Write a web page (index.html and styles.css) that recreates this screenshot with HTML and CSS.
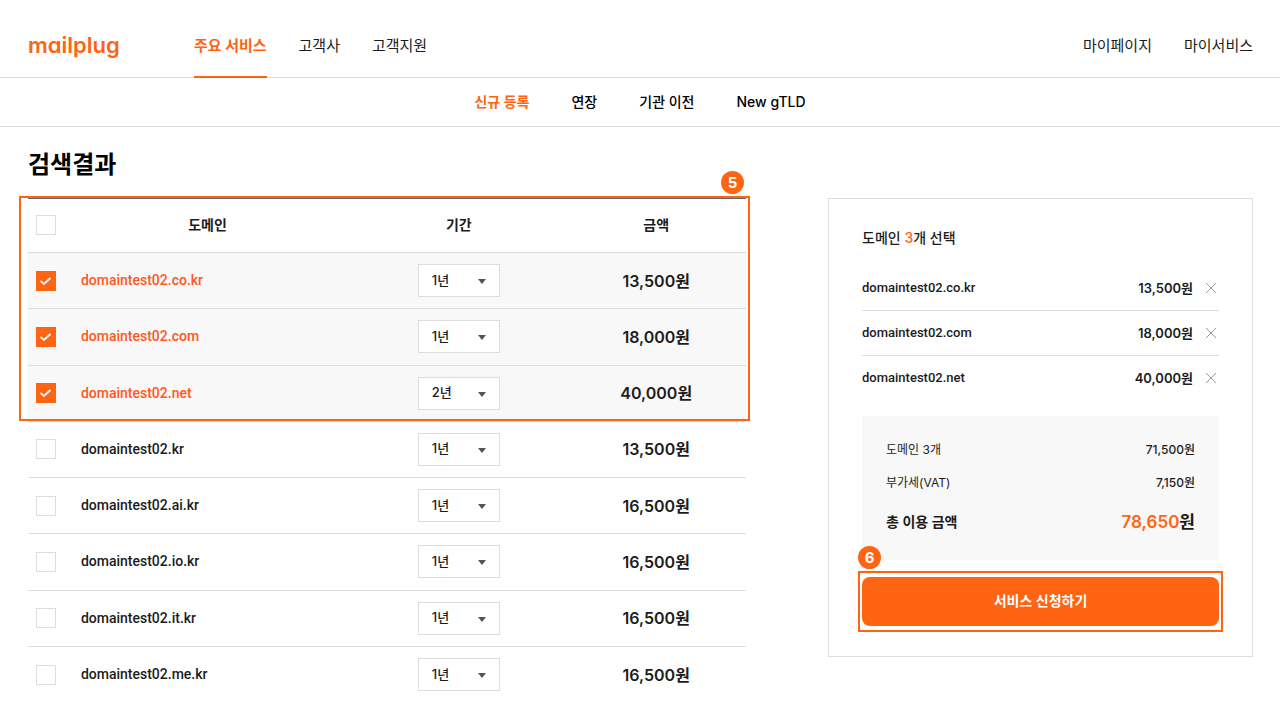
FILE: index.html
```html
<!DOCTYPE html>
<html lang="ko">
<head>
<meta charset="utf-8">
<meta name="viewport" content="width=device-width, initial-scale=1">
<title>mailplug</title>
<link rel="stylesheet" href="styles.css">
</head>
<body>
<header class="header">
  <a class="logo" href="#">mailplug</a>
  <nav class="main-nav">
    <a class="nav-link active" href="#">주요 서비스</a>
    <a class="nav-link" href="#">고객사</a>
    <a class="nav-link" href="#">고객지원</a>
  </nav>
  <nav class="user-nav">
    <a class="nav-link" href="#">마이페이지</a>
    <a class="nav-link" href="#">마이서비스</a>
  </nav>
</header>
<nav class="sub-nav">
  <a class="sub-link active" href="#">신규 등록</a>
  <a class="sub-link" href="#">연장</a>
  <a class="sub-link" href="#">기관 이전</a>
  <a class="sub-link" href="#">New gTLD</a>
</nav>
<main class="content">
  <h1 class="title">검색결과</h1>
  <div class="columns">
    <section class="results">
      <table class="domains">
        <thead>
          <tr>
            <th class="col-check"><input class="check" type="checkbox" aria-label="전체 선택"></th>
            <th class="col-domain">도메인</th>
            <th class="col-period">기간</th>
            <th class="col-price">금액</th>
          </tr>
        </thead>
        <tbody>
          <tr class="selected">
            <td><input class="check" type="checkbox" id="d1" checked></td>
            <td class="domain"><label for="d1">domaintest02.co.kr</label></td>
            <td><span class="period"><select aria-label="기간"><option>1년</option><option>2년</option></select></span></td>
            <td class="price">13,500원</td>
          </tr>
          <tr class="selected">
            <td><input class="check" type="checkbox" id="d2" checked></td>
            <td class="domain"><label for="d2">domaintest02.com</label></td>
            <td><span class="period"><select aria-label="기간"><option>1년</option><option>2년</option></select></span></td>
            <td class="price">18,000원</td>
          </tr>
          <tr class="selected">
            <td><input class="check" type="checkbox" id="d3" checked></td>
            <td class="domain"><label for="d3">domaintest02.net</label></td>
            <td><span class="period"><select aria-label="기간"><option>1년</option><option selected>2년</option></select></span></td>
            <td class="price">40,000원</td>
          </tr>
          <tr>
            <td><input class="check" type="checkbox" id="d4"></td>
            <td class="domain"><label for="d4">domaintest02.kr</label></td>
            <td><span class="period"><select aria-label="기간"><option>1년</option><option>2년</option></select></span></td>
            <td class="price">13,500원</td>
          </tr>
          <tr>
            <td><input class="check" type="checkbox" id="d5"></td>
            <td class="domain"><label for="d5">domaintest02.ai.kr</label></td>
            <td><span class="period"><select aria-label="기간"><option>1년</option><option>2년</option></select></span></td>
            <td class="price">16,500원</td>
          </tr>
          <tr>
            <td><input class="check" type="checkbox" id="d6"></td>
            <td class="domain"><label for="d6">domaintest02.io.kr</label></td>
            <td><span class="period"><select aria-label="기간"><option>1년</option><option>2년</option></select></span></td>
            <td class="price">16,500원</td>
          </tr>
          <tr>
            <td><input class="check" type="checkbox" id="d7"></td>
            <td class="domain"><label for="d7">domaintest02.it.kr</label></td>
            <td><span class="period"><select aria-label="기간"><option>1년</option><option>2년</option></select></span></td>
            <td class="price">16,500원</td>
          </tr>
          <tr>
            <td><input class="check" type="checkbox" id="d8"></td>
            <td class="domain"><label for="d8">domaintest02.me.kr</label></td>
            <td><span class="period"><select aria-label="기간"><option>1년</option><option>2년</option></select></span></td>
            <td class="price">16,500원</td>
          </tr>
        </tbody>
      </table>
      <div class="mark mark-results"><span class="step">5</span></div>
    </section>
    <aside class="cart">
      <h2 class="cart-title">도메인 <em>3</em>개 선택</h2>
      <ul class="cart-list">
        <li><span class="cart-name">domaintest02.co.kr</span><span class="cart-price">13,500원</span><button class="remove" type="button" aria-label="삭제"><svg viewBox="0 0 12 12" width="12" height="12"><path d="M1 1l10 10M11 1L1 11"/></svg></button></li>
        <li><span class="cart-name">domaintest02.com</span><span class="cart-price">18,000원</span><button class="remove" type="button" aria-label="삭제"><svg viewBox="0 0 12 12" width="12" height="12"><path d="M1 1l10 10M11 1L1 11"/></svg></button></li>
        <li><span class="cart-name">domaintest02.net</span><span class="cart-price">40,000원</span><button class="remove" type="button" aria-label="삭제"><svg viewBox="0 0 12 12" width="12" height="12"><path d="M1 1l10 10M11 1L1 11"/></svg></button></li>
      </ul>
      <dl class="summary">
        <div class="sum-row"><dt>도메인 3개</dt><dd>71,500원</dd></div>
        <div class="sum-row"><dt>부가세(VAT)</dt><dd>7,150원</dd></div>
        <div class="sum-row total"><dt>총 이용 금액</dt><dd><em>78,650</em>원</dd></div>
      </dl>
      <div class="apply">
        <button class="apply-button" type="button">서비스 신청하기</button>
        <div class="mark mark-apply"><span class="step">6</span></div>
      </div>
    </aside>
  </div>
</main>
</body>
</html>
```
FILE: styles.css
```css
* { box-sizing: border-box; }

body {
  margin: 0;
  background: #fff;
  color: #1c1c1c;
  font-family: Inter, "Noto Sans CJK KR", sans-serif;
  font-size: 14px;
  line-height: 20px;
}

a { color: inherit; text-decoration: none; }
em { font-style: normal; color: #ff6413; }
button, select, input { font: inherit; color: inherit; margin: 0; }

.header {
  display: flex;
  height: 78px;
  padding: 0 27px 0 28px;
  border-bottom: 1px solid #ddd;
}
.logo {
  flex: 0 0 166px;
  align-self: center;
  padding-top: 12px;
  color: #ff6413;
  font-size: 22px;
  font-weight: 600;
  line-height: 28px;
  font-feature-settings: "cv11";
}
.main-nav, .user-nav { display: flex; gap: 32px; }
.user-nav { margin-left: auto; }
.nav-link {
  height: 78px;
  padding-top: 36px;
  font-size: 15px;
  font-weight: 400;
}
.nav-link.active {
  border-bottom: 2px solid #ff6413;
  color: #ff6413;
  font-weight: 700;
}

.sub-nav {
  display: flex;
  justify-content: center;
  align-items: center;
  gap: 42px;
  height: 49px;
  border-bottom: 1px solid #ddd;
  color: #000;
  font-weight: 500;
}
.sub-link.active { color: #ff6413; font-weight: 600; }

.content { padding: 22px 27px 20px 28px; }
.title {
  margin: 0 0 16px;
  color: #000;
  font-size: 24px;
  font-weight: 700;
  line-height: 32px;
}
.columns {
  display: grid;
  grid-template-columns: minmax(0, 1fr) 425px;
  align-items: start;
  gap: 82px;
}
.results { position: relative; }

.domains {
  width: 100%;
  height: 506px;
  border-collapse: separate;
  border-spacing: 0;
  border-top: 2px solid #666;
  table-layout: fixed;
}
.col-check { width: 5%; }
.col-domain { width: 40%; }
.col-period { width: 30%; }
.col-price { width: 25%; }
.domains th, .domains td {
  height: 56px;
  padding: 0;
  border-bottom: 1px solid #ddd;
  text-align: center;
  vertical-align: middle;
}
.domains th { height: 54px; padding-bottom: 2px; font-weight: 600; }
.domains tr > :first-child { padding-left: 8px; text-align: left; }
.domains tbody tr:last-child td { border-bottom: 0; }
.domains .domain {
  padding: 0 0 1px 17px;
  text-align: left;
  font-family: Roboto, sans-serif;
  font-size: 14px;
  font-weight: 500;
}
.domains .price { font-size: 16px; font-weight: 600; }
.selected { background: #f8f8f8; }
.selected .domain { color: #ff5722; }

.check {
  display: block;
  width: 20px;
  height: 20px;
  appearance: none;
  border: 1px solid #ddd;
  background: #fff;
}
.check:checked {
  border-color: #ff6413;
  background: #ff6413 url("data:image/svg+xml,%3Csvg xmlns='http://www.w3.org/2000/svg' viewBox='0 0 18 18'%3E%3Cpath d='M3.5 8.8l3.4 3.2 6.6-6' fill='none' stroke='white' stroke-width='1.8'/%3E%3C/svg%3E") center / 18px no-repeat;
}

.period { position: relative; display: inline-block; vertical-align: middle; }
.period select {
  display: block;
  width: 82px;
  height: 33px;
  padding: 0 13px 2px;
  appearance: none;
  border: 1px solid #ddd;
  border-radius: 0;
  background: #fff;
  font-size: 13px;
  font-weight: 500;
}
.period::after {
  content: "";
  position: absolute;
  top: 15px;
  right: 14px;
  border: 4px solid transparent;
  border-top: 5px solid #555;
  border-bottom-width: 0;
  pointer-events: none;
}

.mark {
  position: absolute;
  border: 2px solid #ff6413;
  pointer-events: none;
}
.mark-results { top: -1px; left: -9px; right: -4px; height: 225px; }
.mark-apply { top: -6px; right: -4px; bottom: -6px; left: -4px; }
.step {
  position: absolute;
  width: 23px;
  height: 23px;
  border-radius: 50%;
  background: #ff6413;
  color: #fff;
  font-size: 15px;
  font-weight: 700;
  line-height: 23px;
  text-align: center;
}
.mark-results .step { top: -27px; right: 4px; }
.mark-apply .step { top: -27px; left: -2px; }

.cart {
  margin-top: 1px;
  padding: 29px 33px 30px;
  border: 1px solid #ddd;
}
.cart-title { margin: 0 0 18px; font-size: 14px; font-weight: 500; line-height: 20px; }
.cart-list { margin: 0 0 15px; padding: 0; list-style: none; }
.cart-list li {
  display: flex;
  align-items: center;
  height: 45px;
  border-bottom: 1px solid #ddd;
  font-size: 13px;
}
.cart-list li:last-child { border-bottom-color: transparent; }
.cart-name { font-family: Roboto, sans-serif; font-weight: 500; }
.cart-price { margin-left: auto; font-weight: 600; }
.remove {
  margin-left: 10px;
  padding: 2px;
  border: 0;
  background: none;
}
.remove svg { display: block; fill: none; stroke: #999; }

.summary { margin: 0; padding: 24px 24px 28px; background: #f8f8f8; font-size: 12px; }
.sum-row { display: flex; justify-content: space-between; margin-bottom: 13px; }
.sum-row dd { margin: 0; font-weight: 500; }
.sum-row.total { margin: 19px 0 0; font-size: 14px; font-weight: 600; }
.sum-row.total dd { font-size: 17px; font-weight: 600; }

.apply { position: relative; margin-top: 17px; }
.apply-button {
  display: block;
  width: 100%;
  height: 49px;
  padding: 0 0 2px;
  border: 0;
  border-radius: 8px;
  background: #ff6413;
  color: #fff;
  font-weight: 600;
}
```
